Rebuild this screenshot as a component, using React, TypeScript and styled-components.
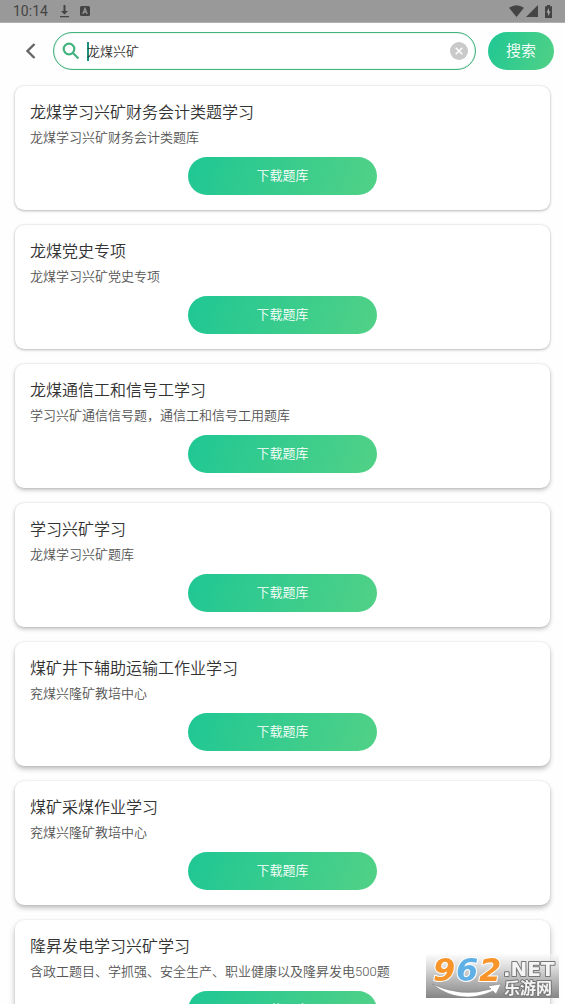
import React, { useState } from "react";
import styled, { createGlobalStyle } from "styled-components";

const GlobalStyle = createGlobalStyle`
  * { box-sizing: border-box; }
  body {
    margin: 0;
    background: #fefefe;
    font-family: Roboto, "Noto Sans CJK SC", sans-serif;
    font-weight: 350;
    color: #333;
  }
`;

const Screen = styled.div`
  height: 100vh;
  display: flex;
  flex-direction: column;
  overflow: hidden;
`;

const StatusBar = styled.div`
  flex: none;
  height: 23px;
  padding: 0 12px 0 13px;
  display: flex;
  align-items: center;
  background: #999;
  border-bottom: 1px solid #b0b0b0;
  color: #444;
  svg { display: block; }
`;

const Clock = styled.span`
  font-size: 14px;
  font-weight: 400;
  line-height: 22px;
  margin-right: 11px;
`;

const StatusIcons = styled.div`
  display: flex;
  align-items: center;
  gap: 10px;
`;

const SystemIcons = styled(StatusIcons)`
  margin-left: auto;
  gap: 2px;
`;

const Header = styled.header`
  flex: none;
  display: flex;
  align-items: center;
  padding: 9px 11px 9px 22px;
`;

const BackButton = styled.button`
  width: 18px;
  height: 38px;
  margin-right: 13px;
  padding: 0;
  border: 0;
  background: none;
  display: flex;
  align-items: center;
  justify-content: center;
`;

const SearchBox = styled.label`
  flex: 1;
  min-width: 0;
  height: 38px;
  margin-right: 12px;
  padding: 0 7px 0 8px;
  display: flex;
  align-items: center;
  border: 1px solid #43b37f;
  box-shadow: inset 0 0 1px #43b37f;
  border-radius: 19px;
  background: #fff;
`;

const Caret = styled.span`
  width: 2px;
  height: 19px;
  margin-left: 7px;
  margin-right: -2px;
  background: #1c8f7f;
`;

const SearchInput = styled.input`
  flex: 1;
  min-width: 0;
  height: 28px;
  padding: 0 0 2px;
  border: 0;
  outline: 0;
  background: none;
  font: inherit;
  font-size: 13px;
  color: #333;
`;

const ClearButton = styled.button`
  width: 18px;
  height: 18px;
  padding: 0;
  border: 0;
  border-radius: 50%;
  background: #c9c9c9;
  display: flex;
  align-items: center;
  justify-content: center;
`;

const PillButton = styled.button<{ $width: number; $size: number }>`
  display: block;
  flex: none;
  width: ${(p) => p.$width}px;
  height: 38px;
  padding: 0;
  border: 0;
  border-radius: 19px;
  background: linear-gradient(110deg, #1fc794, #51d186);
  color: #fff;
  font: inherit;
  font-size: ${(p) => p.$size}px;
  line-height: 38px;
`;

const List = styled.main`
  flex: 1;
  min-height: 0;
  overflow-y: auto;
  scrollbar-width: none;
  padding: 7px 15px 15px;
  display: flex;
  flex-direction: column;
  gap: 15px;
`;

/* The lower a card stands on the screen, the deeper its shadow falls. */
const Card = styled.article<{ $depth: number }>`
  flex: none;
  padding: 15px;
  border-radius: 9px;
  background: #fff;
  box-shadow:
    0 0 2px rgba(0, 0, 0, 0.12),
    0 ${(p) => 1 + Math.floor(p.$depth / 2)}px ${(p) => 3 + Math.floor(p.$depth / 2)}px
      rgba(0, 0, 0, 0.25);
`;

const Title = styled.h2`
  margin: 0;
  font-size: 16px;
  font-weight: inherit;
  line-height: 24px;
  color: #333;
`;

const Description = styled.p`
  margin: 0 0 6px;
  font-size: 13px;
  line-height: 26px;
  color: #555;
`;

const Actions = styled.div`
  display: flex;
  justify-content: center;
`;

const Watermark = styled.div`
  position: fixed;
  right: 6px;
  bottom: 6px;
  width: 133px;
  height: 44px;
  background: linear-gradient(rgba(250, 250, 250, 0.5), #dcdcdc 30%, #858585);
  svg { display: block; }
`;

const banks = [
  { title: "龙煤学习兴矿财务会计类题学习", text: "龙煤学习兴矿财务会计类题库" },
  { title: "龙煤党史专项", text: "龙煤学习兴矿党史专项" },
  { title: "龙煤通信工和信号工学习", text: "学习兴矿通信信号题，通信工和信号工用题库" },
  { title: "学习兴矿学习", text: "龙煤学习兴矿题库" },
  { title: "煤矿井下辅助运输工作业学习", text: "兖煤兴隆矿教培中心" },
  { title: "煤矿采煤作业学习", text: "兖煤兴隆矿教培中心" },
  { title: "隆昇发电学习兴矿学习", text: "含政工题目、学抓强、安全生产、职业健康以及隆昇发电500题" },
];

function SiteLogo() {
  return (
    <Watermark>
      <svg width="133" height="44" viewBox="0 0 133 44" role="img" aria-label="962.NET 乐游网">
        <g
          fontFamily="DejaVu Sans"
          fontWeight="700"
          fontStyle="italic"
          fontSize="32"
          stroke="#fff"
          strokeWidth="2"
          paintOrder="stroke"
          strokeLinejoin="round"
        >
          <text x="7" y="27" fill="#f7952b">9</text>
          <text x="30" y="27" fill="#5fb0e6">6</text>
          <text x="53" y="27" fill="#f7952b">2</text>
        </g>
        <path
          d="M6 30Q36 44 65 35L62 32L75 30L70 40L67 37Q34 52 6 30Z"
          fill="#fff"
          stroke="#888"
          strokeWidth=".6"
        />
        <g fill="#f4f4f4" stroke="#777" strokeWidth="2" paintOrder="stroke" strokeLinejoin="round" fontWeight="700">
          <text x="77" y="22" fontFamily="DejaVu Sans" fontSize="20">.NET</text>
          <text x="78" y="40" fontFamily="Noto Sans CJK SC" fontSize="16">乐游网</text>
        </g>
      </svg>
    </Watermark>
  );
}

export default function App() {
  const [query, setQuery] = useState("龙煤兴矿");
  return (
    <>
      <GlobalStyle />
      <Screen>
        <StatusBar>
          <Clock>10:14</Clock>
          <StatusIcons>
            <svg width="11" height="13" viewBox="0 0 11 13">
              <path d="M4.5 0h2v6H9L5.5 9.5 2 6h2.500zM1 11h9v1.300H1z" fill="#444" />
            </svg>
            <svg width="10" height="10" viewBox="0 0 10 10">
              <rect width="10" height="10" rx="1.500" fill="#444" />
              <path d="M2.800 8L5 2.300 7.200 8M3.600 6.200h2.800" fill="none" stroke="#999" strokeWidth="1.200" />
            </svg>
          </StatusIcons>
          <SystemIcons>
            <svg width="15" height="12" viewBox="0 0 15 12">
              <path d="M0 2.700Q7.500-2.300 15 2.700L7.500 12z" fill="#444" />
            </svg>
            <svg width="12" height="12" viewBox="0 0 12 12">
              <path d="M12 0v12H0z" fill="#444" />
            </svg>
            <svg width="13" height="13" viewBox="0 0 13 13">
              <path d="M5 1.300H7V0h3v1.300h2V13H5z" fill="#444" />
              <path d="M9 3L6.500 7.500h1.600V11.200L10.500 6.500h-1.500z" fill="#aaa" />
            </svg>
          </SystemIcons>
        </StatusBar>
        <Header>
          <BackButton aria-label="返回">
            <svg width="18" height="18" viewBox="0 0 18 18">
              <path d="M12.500 2L5.500 9l7 7" fill="none" stroke="#666" strokeWidth="2.400" />
            </svg>
          </BackButton>
          <SearchBox>
            <svg width="18" height="18" viewBox="0 0 18 18" fill="none" stroke="#43b37f" strokeWidth="2.200">
              <circle cx="7" cy="7" r="5.300" />
              <path d="M11 11l5.500 5.500" />
            </svg>
            <Caret />
            <SearchInput aria-label="搜索题库" value={query} onChange={(e) => setQuery(e.target.value)} />
            <ClearButton aria-label="清除" onClick={() => setQuery("")}>
              <svg width="8" height="8" viewBox="0 0 8 8">
                <path d="M.7.7l6.600 6.600M7.300.7L.7 7.300" stroke="#fff" strokeWidth="1.500" />
              </svg>
            </ClearButton>
          </SearchBox>
          <PillButton $width={66} $size={15}>搜索</PillButton>
        </Header>
        <List>
          {banks.map((bank, i) => (
            <Card key={bank.title} $depth={i}>
              <Title>{bank.title}</Title>
              <Description>{bank.text}</Description>
              <Actions>
                <PillButton $width={189} $size={13}>下载题库</PillButton>
              </Actions>
            </Card>
          ))}
        </List>
      </Screen>
      <SiteLogo />
    </>
  );
}
